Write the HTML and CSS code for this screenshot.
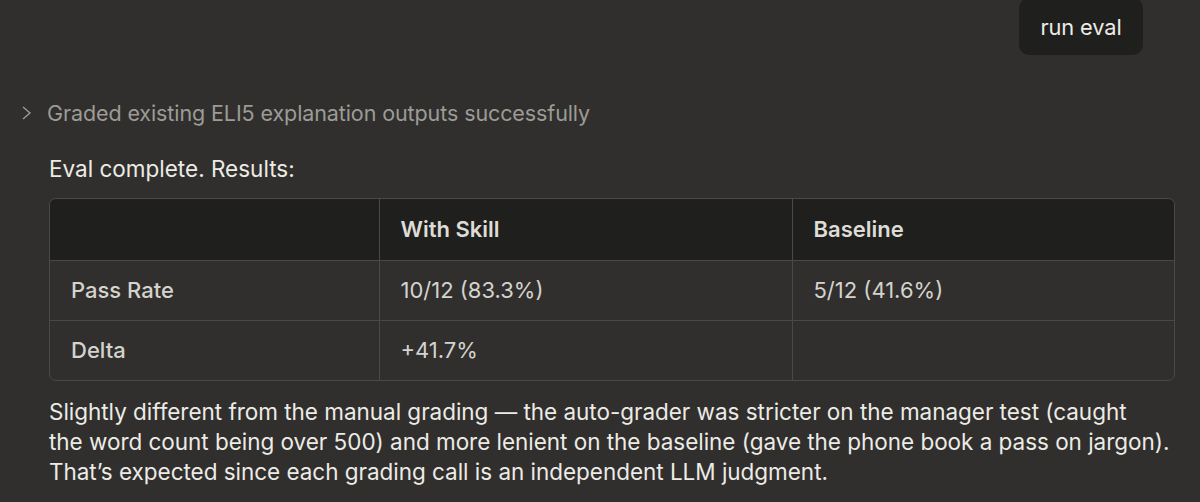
FILE: index.html
```html
<!DOCTYPE html>
<html>
<head>
<meta charset="utf-8">
<link rel="stylesheet" href="styles.css">
</head>
<body>
<div class="page">
  <div class="user-row">
    <div class="bubble">run eval</div>
  </div>
  <div class="tool-row">
    <svg class="chev" width="12" height="16" viewBox="0 0 12 16"><path d="M2 2 L9 8 L2 14" fill="none" stroke="#9c9b96" stroke-width="1.4"/></svg>
    <span class="tool-text">Graded existing ELI5 explanation outputs successfully</span>
  </div>
  <div class="content">
    <p class="lead">Eval complete. Results:</p>
    <div class="table-wrap">
      <table class="results">
        <thead>
          <tr><th class="c1"></th><th class="c2">With Skill</th><th class="c3">Baseline</th></tr>
        </thead>
        <tbody>
          <tr><td class="label">Pass Rate</td><td>10/12 (83.3%)</td><td>5/12 (41.6%)</td></tr>
          <tr><td class="label">Delta</td><td>+41.7%</td><td></td></tr>
        </tbody>
      </table>
    </div>
    <p class="para">Slightly different from the manual grading — the auto-grader was stricter on the manager test (caught<br>the word count being over 500) and more lenient on the baseline (gave the phone book a pass on jargon).<br>That’s expected since each grading call is an independent LLM judgment.</p>
  </div>
</div>
</body>
</html>
```
FILE: styles.css
```css
html, body {
  margin: 0;
  padding: 0;
  background: #302f2d;
  height: 100%;
  overflow: hidden;
}
body {
  font-family: Inter, "Noto Sans", sans-serif;
  color: #ecebe6;
}
.page {
  width: 1200px;
  height: 502px;
}
.user-row {
  display: flex;
  justify-content: flex-end;
  padding-right: 57px;
  margin-top: -2px;
}
.bubble {
  background: #1f1f1d;
  color: #ecebe6;
  font-size: 21.8px;
  border-radius: 10px;
  height: 57px;
  box-sizing: border-box;
  width: 124px;
  display: flex;
  align-items: center;
  justify-content: center;
  letter-spacing: -0.1px;
}
.tool-row {
  display: flex;
  align-items: center;
  margin-top: 45px;
  padding-left: 21px;
  height: 26px;
}
.chev {
  margin-right: 14px;
}
.tool-text {
  color: #9c9b96;
  font-size: 21.5px;
  letter-spacing: -0.1px;
}
.content {
  padding-left: 49px;
  padding-right: 25px;
}
.lead {
  margin: 30px 0 0 0;
  font-size: 22.5px;
  line-height: 26px;
  letter-spacing: 0;
}
.table-wrap {
  margin-top: 16px;
  border: 1px solid #4a4946;
  border-radius: 7px;
  overflow: hidden;
  width: 1126px;
  box-sizing: border-box;
}
.results {
  border-collapse: collapse;
  width: 100%;
  table-layout: fixed;
  font-size: 22px;
}
.results th, .results td {
  text-align: left;
  padding: 0 21px;
  height: 60px;
  box-sizing: border-box;
  border-left: 1px solid #4a4946;
  color: #d4d3cd;
}
.results th:first-child, .results td:first-child {
  border-left: none;
}
.results thead th {
  background: #1f1f1d;
  font-weight: 600;
  height: 61px;
  color: #dddcd6;
}
.results tbody tr {
  border-top: 1px solid #4a4946;
}
.results td {
  font-weight: 400;
}
.results td.label {
  font-weight: 500;
}
.c1 { width: 329px; }
.c2 { width: 413px; }
.para {
  margin: 16px 0 0 0;
  font-size: 22.5px;
  line-height: 30px;
  color: #ecebe6;
  white-space: nowrap;
  letter-spacing: -0.03px;
}
```
